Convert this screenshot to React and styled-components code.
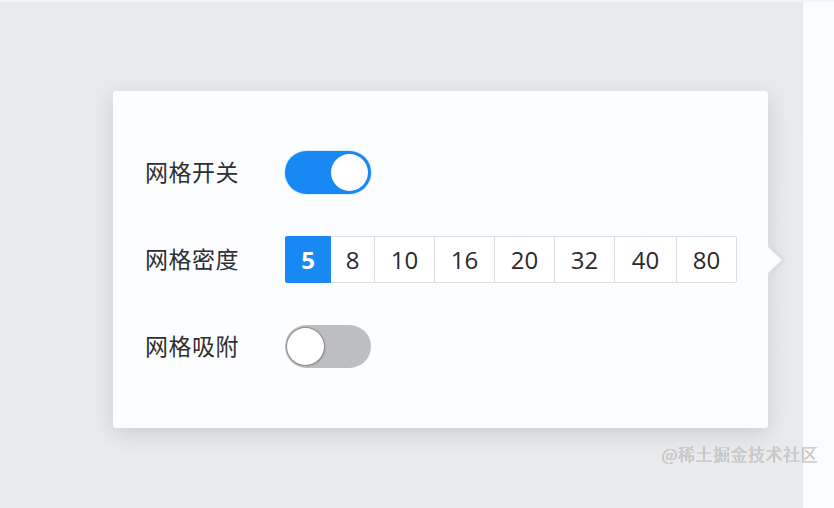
import React, { useState } from 'react';
import styled, { createGlobalStyle } from 'styled-components';

const GlobalStyle = createGlobalStyle`
  html, body {
    margin: 0;
    padding: 0;
    background: #e9eaec;
  }
  body {
    font-family: "Open Sans", "Noto Sans CJK SC", sans-serif;
  }
`;

const Page = styled.div`
  display: flex;
  width: 834px;
  height: 508px;
  overflow: hidden;
  position: relative;
  border-top: 2px solid #f3f4f5;
  box-sizing: border-box;
`;

const Stage = styled.div`
  flex: 1;
  padding: 89px 0 0 113px;
  background: linear-gradient(180deg, #e8e9eb 0%, #eaebed 100%);
`;

const SideStrip = styled.div`
  width: 31px;
  background: #fafbfc;
`;

const Card = styled.div`
  position: relative;
  width: 655px;
  height: 337px;
  box-sizing: border-box;
  padding: 58px 0 0 32px;
  background: #fcfdfe;
  border-radius: 3px;
  box-shadow: 0 6px 22px rgba(0, 0, 0, 0.13);
  display: flex;
  flex-direction: column;
  gap: 40px;

  &::after {
    content: '';
    position: absolute;
    right: -14px;
    top: 156px;
    width: 0;
    height: 0;
    border-top: 13px solid transparent;
    border-bottom: 13px solid transparent;
    border-left: 14px solid #fcfdfe;
    filter: drop-shadow(3px 0 2px rgba(0, 0, 0, 0.06));
  }
`;

const Row = styled.div`
  display: flex;
  align-items: center;
  height: 47px;
`;

const Label = styled.div`
  width: 140px;
  font-family: "Noto Sans CJK SC", sans-serif;
  font-size: 23px;
  line-height: 1;
  margin-top: -2px;
  color: #2f2f33;
  letter-spacing: 0.5px;
`;

const Switch = styled.button`
  position: relative;
  width: 86px;
  height: 43px;
  padding: 0;
  border: none;
  border-radius: 22px;
  background: ${p => (p.$on ? '#1788f4' : '#bdbec1')};
  box-shadow: ${p => (p.$on ? '0 0 2px rgba(23,136,244,0.5)' : 'none')};
  cursor: pointer;
`;

const Knob = styled.span`
  position: absolute;
  top: 3px;
  left: ${p => (p.$on ? '46px' : '2px')};
  width: 37px;
  height: 37px;
  border-radius: 50%;
  background: #ffffff;
  box-shadow: ${p => (p.$on ? 'none' : '0 0 0 1px #8c8d90, 1px 1px 2px rgba(0,0,0,0.25)')};
`;

const Segments = styled.div`
  display: flex;
  height: 47px;
`;

const Segment = styled.button`
  width: ${p => p.$w}px;
  height: 47px;
  padding: 0;
  margin-left: -1px;
  border: 1px solid ${p => (p.$active ? '#1788f4' : '#dcdde0')};
  background: ${p => (p.$active ? '#1788f4' : '#ffffff')};
  color: ${p => (p.$active ? '#ffffff' : '#2a2a2e')};
  font-family: "Open Sans", sans-serif;
  font-size: 24px;
  font-weight: ${p => (p.$active ? 700 : 400)};
  position: relative;
  z-index: ${p => (p.$active ? 1 : 0)};
  cursor: pointer;

  &:first-child {
    margin-left: 0;
    border-radius: 2px 0 0 2px;
  }
  &:last-child {
    border-radius: 0 2px 2px 0;
  }
`;

const Watermark = styled.div`
  position: absolute;
  right: 16px;
  bottom: 42px;
  font-family: "Noto Sans CJK SC", sans-serif;
  font-size: 17px;
  color: #cfd0d3;
  text-shadow: 0 0 0.6px #8a8b8f;
  letter-spacing: 0.5px;
`;

const densities = [
  { v: 5, w: 46 },
  { v: 8, w: 45 },
  { v: 10, w: 61 },
  { v: 16, w: 61 },
  { v: 20, w: 61 },
  { v: 32, w: 61 },
  { v: 40, w: 63 },
  { v: 80, w: 61 },
];

export default function App() {
  const [grid, setGrid] = useState(true);
  const [snap, setSnap] = useState(false);
  const [density, setDensity] = useState(5);

  return (
    <>
      <GlobalStyle />
      <Page>
        <Stage>
          <Card>
            <Row>
              <Label>网格开关</Label>
              <Switch $on={grid} onClick={() => setGrid(!grid)}>
                <Knob $on={grid} />
              </Switch>
            </Row>
            <Row>
              <Label>网格密度</Label>
              <Segments>
                {densities.map(d => (
                  <Segment
                    key={d.v}
                    $w={d.w}
                    $active={density === d.v}
                    onClick={() => setDensity(d.v)}
                  >
                    {d.v}
                  </Segment>
                ))}
              </Segments>
            </Row>
            <Row>
              <Label>网格吸附</Label>
              <Switch $on={snap} onClick={() => setSnap(!snap)}>
                <Knob $on={snap} />
              </Switch>
            </Row>
          </Card>
        </Stage>
        <SideStrip />
        <Watermark>@稀土掘金技术社区</Watermark>
      </Page>
    </>
  );
}
